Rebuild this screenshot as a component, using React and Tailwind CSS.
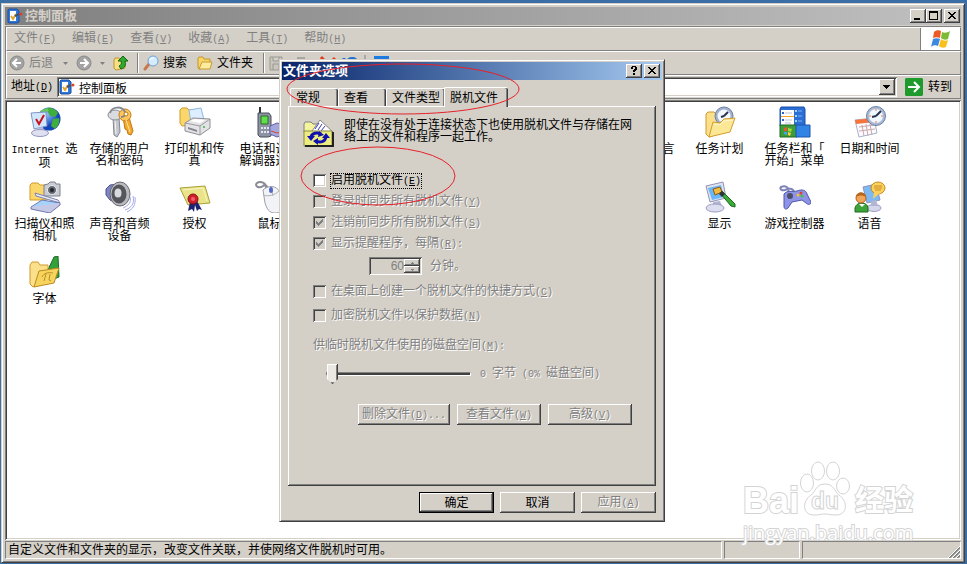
// src/App.jsx

import React, { useState } from "react";

const sunken = "shadow-[inset_1px_1px_#808080,inset_-1px_-1px_#fff,inset_2px_2px_#404040,inset_-2px_-2px_#d4d0c8]";
const raised = "shadow-[inset_-1px_-1px_#404040,inset_1px_1px_#fff,inset_-2px_-2px_#808080]";
const frame = "border border-[#404040] border-t-[#d4d0c8] border-l-[#d4d0c8] bg-[#d4d0c8] shadow-[inset_1px_1px_#fff,inset_-1px_-1px_#808080]";
const etched = "text-[#808080] [text-shadow:1px_1px_#fff]";

// half-width text, 6px per character
const Latin = ({ children }) => (
    <span className="font-['Liberation_Mono',monospace] text-[10px]">{children}</span>
);

const Key = ({ k, after = "" }) => (
    <Latin>(<u>{k}</u>){after}</Latin>
);

/* ---------- control panel icons ---------- */

const InternetIcon = () => (
    <svg viewBox="0 0 32 32" className="size-8">
        <defs>
            <radialGradient id="globe" cx=".4" cy=".3"><stop offset="0" stopColor="#8fc4ff" /><stop offset="1" stopColor="#1346b8" /></radialGradient>
        </defs>
        <circle cx="20" cy="13" r="11.500" fill="url(#globe)" />
        <path d="M18 2c5-1 9 2 11 5l-3 4-5-1-2-4zM24 13l6-1c1 5-1 8-4 11l-4-3z" fill="#3fae3c" />
        <path d="M11 5l7-3 2 3-6 2z" fill="#6cc85a" />
        <path d="M2 7l15-1 1 14-13 3z" fill="#cfe6fb" stroke="#7f93c8" />
        <path d="M7 13l3 5 5-9" fill="none" stroke="#c8141c" strokeWidth="2" />
        <path d="M8 22l6-1 1 4H9z" fill="#b9bddb" />
        <ellipse cx="11" cy="27" rx="8.500" ry="3.500" fill="#dfe1f1" stroke="#9297be" />
    </svg>
);

const KeysIcon = () => (
    <svg viewBox="0 0 32 32" className="size-8">
        <path d="M9 11l6 0 1 15-3 5-3-2z" fill="#c3c6cc" stroke="#85888f" />
        <path d="M11 13l1 15" stroke="#f4f5f7" />
        <ellipse cx="11" cy="9" rx="7" ry="5" fill="#d9dbe0" stroke="#8b8e96" />
        <path d="M19 11l6 0 4 14-2 4-3-1-1-4-2-1z" fill="#f3a92c" stroke="#bf7712" />
        <ellipse cx="21" cy="9" rx="6" ry="6" fill="#ffc65a" stroke="#c57f18" />
        <path d="M22 14l4 12" stroke="#ffe3a1" />
        <path d="M6 7c2-7 12-7 15-1 1 3-1 5-4 5" fill="none" stroke="#888b93" strokeWidth="2" />
        <circle cx="22" cy="8" r="2" fill="#fff" stroke="#b97812" />
    </svg>
);

const PrinterIcon = () => (
    <svg viewBox="0 0 32 32" className="size-8">
        <path d="M1 4l2-2h5l2 2h6v15l-13 1-2-3z" fill="#fbd66b" stroke="#d49b28" />
        <path d="M10 4l12-2 3 12-13 3z" fill="#dceeff" stroke="#8fb6e2" />
        <path d="M6 17l8-5 17 1v9l-10 7-15-4z" fill="#e3e3e6" stroke="#8e8e96" />
        <path d="M6 17l15 3 10-7M21 20v9" fill="none" stroke="#9a9aa2" />
        <path d="M9 21l9 3v2l-9-3z" fill="#85858d" />
        <path d="M11 15l5-2 10 1-5 3z" fill="#fff" />
        <circle cx="25" cy="21" r="1" fill="#37b83a" />
    </svg>
);

const PhoneIcon = () => (
    <svg viewBox="0 0 32 32" className="size-8">
        <path d="M5 1h2v7H5z" fill="#333" />
        <path d="M4 7h11l2 3v20l-3 1H6l-2-2z" fill="#8d93a3" stroke="#4a4e5c" />
        <path d="M7 10h7v8H7z" fill="#5fe04a" stroke="#2f6d2b" />
        <path d="M7 21h2v2H7zM10 21h2v2h-2zM13 21h2v2h-2zM7 25h2v2H7zM10 25h2v2h-2zM13 25h2v2h-2z" fill="#e4e6ee" />
        <path d="M16 20l7-3 9 2v9l-9 3-7-3z" fill="#a5a6dd" stroke="#5f60a8" />
        <path d="M17 25l6 2 8-2" stroke="#d2472c" strokeWidth="1" fill="none" />
    </svg>
);

const RegionIcon = () => (
    <svg viewBox="0 0 32 32" className="size-8">
        <circle cx="15" cy="16" r="13" fill="#3b7be0" stroke="#1a4aa0" />
        <path d="M8 6l8 2-2 6-6 4-4-5zM18 16l8 1-4 9-5-3z" fill="#4cb648" />
    </svg>
);

const SchedIcon = () => (
    <svg viewBox="0 0 32 32" className="size-8">
        <path d="M2 8l2-2h6l2 2 2 0v20l-9 3-3-3z" fill="#fbe08c" stroke="#cf9a2b" />
        <circle cx="20" cy="10" r="9" fill="#9fb1cf" stroke="#6d7fa2" />
        <circle cx="20" cy="10" r="6.500" fill="#f4f9ff" />
        <path d="M20 10l4-4M20 10l-3 1" stroke="#2b3550" strokeWidth="2" />
        <path d="M9 16l7 1 4-4 11-1-5 14-21 5z" fill="#fce795" stroke="#d39d2c" />
        <path d="M10 18l6 1 4-4 9-1" stroke="#fff6cf" fill="none" />
    </svg>
);

const TaskbarIcon = () => (
    <svg viewBox="0 0 32 32" className="size-8">
        <path d="M2 1h23l1 2v17H1V3z" fill="#2b6fd6" stroke="#1d4fa6" />
        <path d="M2 4h13v15H2z" fill="#fff" />
        <path d="M2 10h13v1H2z" fill="#f5a623" />
        <path d="M3 6h2v2H3zM3 13h2v2H3z" fill="#2f62c8" />
        <path d="M6 7h7M6 14h7M6 17h6" stroke="#b9c4da" />
        <path d="M16 4h2v2h-2zM16 9h2v2h-2zM16 14h2v2h-2z" fill="#9fd0ff" />
        <path d="M19 5h4M19 10h4M19 15h4" stroke="#7fb5f6" />
        <path d="M1 19h17v12H1z" fill="#3c9d3a" stroke="#20691f" />
        <path d="M17 19h14v12H17z" fill="#3283e6" stroke="#1c56ab" />
        <path d="M5 22l3-1v4l-3 0z" fill="#f0532d" />
        <path d="M9 22l4 1-1 3-3-1z" fill="#9bdc3d" />
        <path d="M5 26h3v3l-3-1z" fill="#4aa0f5" />
        <path d="M9 26l3 1-1 3-2-1z" fill="#fbd03a" />
    </svg>
);

const DateIcon = () => (
    <svg viewBox="0 0 32 32" className="size-8">
        <path d="M1 14l19-2 3 15-18 4z" fill="#fbfbff" stroke="#a9b0cc" />
        <path d="M1 14l19-2 1 4-19 2z" fill="#f4743a" />
        <path d="M5 21l15-2M5 25l16-2M8 19l2 11M12 18l2 12M16 18l2 11" stroke="#c9a9a9" />
        <circle cx="22" cy="10" r="9.500" fill="#a9bad6" stroke="#6d7fa2" />
        <circle cx="22" cy="10" r="7" fill="#f0f8ff" />
        <path d="M22 10l5-5M22 10l-4 1" stroke="#2b3550" strokeWidth="2" />
        <path d="M22 3v2M29 10h-2M22 17v-2M15 10h2" stroke="#ed7a4a" />
    </svg>
);

const ScannerIcon = () => (
    <svg viewBox="0 0 32 32" className="size-8">
        <path d="M1 4l2-2h6l2 2h6v15H1z" fill="#fbd66b" stroke="#d49b28" />
        <path d="M15 4l4-1 2-2h5l1 2h4v12H15z" fill="#c9ccd4" stroke="#7d818c" />
        <circle cx="23" cy="9" r="4.500" fill="#63676f" stroke="#eee" />
        <circle cx="23" cy="9" r="2" fill="#22252d" />
        <path d="M6 12l23 7 2 3L7 15z" fill="#e7eaf5" stroke="#7c83ad" />
        <path d="M2 26l11-7 18 3-10 9z" fill="#a5d3fb" stroke="#7077b0" />
        <path d="M2 26v2l19 4 10-8v-2" fill="#c6c9e6" stroke="#7077b0" />
    </svg>
);

const SpeakerIcon = () => (
    <svg viewBox="0 0 32 32" className="size-8">
        <path d="M2 8l4-4 8-1v20l-8-4-4-5z" fill="#7f86c6" stroke="#4c5188" />
        <ellipse cx="16" cy="13" rx="10" ry="12" fill="#b9bbc0" stroke="#68696e" />
        <ellipse cx="15" cy="13" rx="7.500" ry="9.500" fill="#55565b" />
        <ellipse cx="14" cy="12" rx="3.500" ry="4.500" fill="#d8d9dd" />
        <path d="M26 16c2 5-2 9-7 11M29 15c2 8-2 12-8 14M31 16c1 8-2 12-8 15" fill="none" stroke="#a4a9ea" />
    </svg>
);

const LicenseIcon = () => (
    <svg viewBox="0 0 32 32" className="size-8">
        <path d="M1 7l25-2 5 17-22 2z" fill="#e9e48a" stroke="#a9a136" />
        <path d="M4 9l20-2 4 13" fill="none" stroke="#f8f5c4" />
        <path d="M11 21l-2 9 4-2 2 3 1-7 2 6 2-2 3 1-5-9z" fill="#1c2372" />
        <circle cx="14" cy="18" r="5" fill="#cf1f2b" stroke="#8b0d18" />
        <circle cx="14" cy="18" r="2" fill="#f0606a" />
    </svg>
);

const MouseIcon = () => (
    <svg viewBox="0 0 32 32" className="size-8">
        <path d="M12 8C13 1 6 0 3 2c-3 3 2 6 6 3 2-2 5 0 4 3" fill="none" stroke="#8a8d96" strokeWidth="2" />
        <path d="M9 9c5-5 13-5 17 2l5 12c0 6-5 9-10 9-6 0-8-4-10-10z" fill="#f2f3f6" stroke="#9d9fa8" />
        <path d="M9 14c5 2 12 0 16-4M17 6l2 9" fill="none" stroke="#b0b2ba" />
        <ellipse cx="17" cy="9" rx="2" ry="3" fill="#5568c8" />
    </svg>
);

const DisplayIcon = () => (
    <svg viewBox="0 0 32 32" className="size-8">
        <path d="M2 5l17-4 3 16-16 4z" fill="#e2e3ef" stroke="#8f94b8" />
        <path d="M4 7l13-3 3 12-12 3z" fill="#69b6f8" />
        <path d="M9 21l7-1 2 5H9z" fill="#b3b6d3" />
        <ellipse cx="11" cy="27" rx="9" ry="4" fill="#dddef0" stroke="#9a9dc2" />
        <path d="M9 8l7-2 2 5-7 3z" fill="#f1b93e" stroke="#8a5b12" />
        <path d="M16 12l2-2 13 13v3l-4-1z" fill="#3dab3a" stroke="#1c6b1c" />
        <path d="M15 13l3-3 3 3-3 3z" fill="#333" />
    </svg>
);

const GameIcon = () => (
    <svg viewBox="0 0 32 32" className="size-8">
        <path d="M9 12C11 6 6 4 2 6c-2 2 1 4 4 3 4-2 8-2 9 2" fill="none" stroke="#7f83b5" strokeWidth="2" />
        <path d="M5 13c3-4 9-2 13-3 5-2 9-1 10 3l4 8c0 3-3 3-5 1l-4-3-10 2-4 6c-2 2-4 1-4-2z" fill="#8d94e8" stroke="#4f56a8" />
        <circle cx="11" cy="15" r="3" fill="#4b4e66" />
        <circle cx="19" cy="14" r="1.500" fill="#f2c12e" />
        <circle cx="22" cy="12" r="1.500" fill="#e2402f" />
        <circle cx="23" cy="15" r="1.500" fill="#45bf3c" />
    </svg>
);

const SpeechIcon = () => (
    <svg viewBox="0 0 32 32" className="size-8">
        <path d="M9 6l13-3 4 16-13 3z" fill="#7db9f4" stroke="#8f94b8" />
        <ellipse cx="20" cy="27" rx="7" ry="3.500" fill="#d4d6ea" stroke="#9a9dc2" />
        <path d="M17 20l5-1 2 6h-7z" fill="#b3b6d3" />
        <ellipse cx="24" cy="7" rx="7" ry="6" fill="#fbd25e" stroke="#c68a1e" />
        <path d="M20 11l-1 7 7-6z" fill="#fbd25e" />
        <path d="M20 5h8M20 7h8M21 9h6" stroke="#c98b22" />
        <path d="M1 31v-4c1-4 4-5 7-5s6 2 6 5v4z" fill="#3da33a" stroke="#1e6a1e" />
        <path d="M5 23l3 3 3-3" fill="#fff" />
        <circle cx="7" cy="17" r="5" fill="#f1a556" stroke="#a7622a" />
        <path d="M2 16c0-6 10-6 10 0-3-2-7-2-10 0z" fill="#b8651c" />
    </svg>
);

const FontsIcon = () => (
    <svg viewBox="0 0 32 32" className="size-8">
        <path d="M16 20L25 1l4-1 1 21-5 2v-5h-4z" fill="#34a03a" stroke="#1b6b22" />
        <path d="M1 9l2-3h6l2 3h8v17l-15 5-3-3z" fill="#fbe08c" stroke="#cf9a2b" />
        <path d="M10 15l20-3-5 15-20 4z" fill="#f6d45e" stroke="#bd8a1d" />
        <path d="M13 21c2-4 6-5 11-4M17 18l-2 7M21 18l-1 6 2 1" stroke="#b98f26" fill="none" />
    </svg>
);

const applets = [
    { name: <><Latin>Internet </Latin>选项</>, icon: InternetIcon, col: "col-start-1" },
    { name: "存储的用户名和密码", icon: KeysIcon, col: "col-start-2" },
    { name: "打印机和传真", icon: PrinterIcon, col: "col-start-3" },
    { name: "电话和调制\n解调器选项", icon: PhoneIcon, col: "col-start-4" },
    { name: "区域和语言选项", icon: RegionIcon, col: "col-start-9" },
    { name: "任务计划", icon: SchedIcon, col: "col-start-10" },
    { name: "任务栏和「\n开始」菜单", icon: TaskbarIcon, col: "col-start-11" },
    { name: "日期和时间", icon: DateIcon, col: "col-start-12" },
    { name: "扫描仪和照相机", icon: ScannerIcon, col: "col-start-1" },
    { name: "声音和音频设备", icon: SpeakerIcon, col: "col-start-2" },
    { name: "授权", icon: LicenseIcon, col: "col-start-3" },
    { name: "鼠标", icon: MouseIcon, col: "col-start-4" },
    { name: "显示", icon: DisplayIcon, col: "col-start-10" },
    { name: "游戏控制器", icon: GameIcon, col: "col-start-11" },
    { name: "语音", icon: SpeechIcon, col: "col-start-12" },
    { name: "字体", icon: FontsIcon, col: "col-start-1" },
];

/* ---------- small icons ---------- */

const PanelIcon = () => (
    <svg viewBox="0 0 16 16" className="size-4 shrink-0">
        <path d="M2 1h8l2 2v11l-2 1H2l-1-1V2z" fill="#2e77dd" stroke="#1c4f9e" />
        <path d="M3 3h6v10H3z" fill="#fff" />
        <path d="M4 8l2 3 3-5" fill="none" stroke="#e2a52c" strokeWidth="2" />
        <path d="M8 8l4-2" stroke="#44516f" strokeWidth="2" />
        <circle cx="14" cy="6" r="1.500" fill="#d8432a" />
    </svg>
);

const CircleArrow = ({ flip }) => (
    <svg viewBox="0 0 16 16" className={flip ? "size-4 -scale-x-100" : "size-4"}>
        <circle cx="8" cy="8" r="7" fill="#a3a3a3" stroke="#8b8b8b" />
        <path d="M12 8H5M8 4L4 8l4 4" fill="none" stroke="#fff" strokeWidth="2" />
    </svg>
);

const Caret = () => (
    <svg viewBox="0 0 5 3" className="h-[3px] w-[5px]"><path d="M0 0h5L2.500 3z" fill="#808080" /></svg>
);

const UpIcon = () => (
    <svg viewBox="0 0 16 16" className="size-4">
        <path d="M1 5l1-2h4l1 2h5v8l-9 2-2-2z" fill="#f9df82" stroke="#c4942b" />
        <path d="M8 14c4-1 5-4 4-8h3l-5-5-5 5h3c1 3 0 4-2 5z" fill="#2faa2f" stroke="#146414" />
    </svg>
);

const SearchIcon = () => (
    <svg viewBox="0 0 16 16" className="size-4">
        <path d="M6 9l-4 5" stroke="#c77a50" strokeWidth="3" strokeLinecap="round" />
        <circle cx="10" cy="6" r="5" fill="#d5ecff" stroke="#6f9fd8" strokeWidth="1" />
        <path d="M7 5c1-2 3-2 4-2" fill="none" stroke="#fff" strokeWidth="1" />
    </svg>
);

const FolderIcon = () => (
    <svg viewBox="0 0 16 16" className="size-4">
        <path d="M1 3l1-1h4l1 2h6v3l-9 7H2l-1-1z" fill="#f8d568" stroke="#c4942b" />
        <path d="M5 7h10l-2 7H2z" fill="#fdeba0" stroke="#c99a30" />
    </svg>
);

const FlagIcon = () => (
    <svg viewBox="0 0 20 18" className="h-[18px] w-5">
        <path d="M3 2c2-2 5-2 7-1L9 8C7 7 4 7 2 8z" fill="#ee5a24" />
        <path d="M11 2c2 1 5 1 8-1l-2 8c-2 1-5 1-7-1z" fill="#7dbb35" />
        <path d="M2 9c2-1 5-1 7 0l-2 7c-2-1-5-1-7 1z" fill="#3f88e0" />
        <path d="M10 9c2 2 5 2 7 1l-2 7c-2 1-5 1-7-1z" fill="#f8c11c" />
    </svg>
);

const OfflineIcon = () => (
    <svg viewBox="0 0 32 28" className="h-7 w-8">
        <path d="M1 5l1-2h6l2 2h6v8H1z" fill="#f4f4a0" stroke="#808080" />
        <path d="M9 12l8-11 13 12-4 6z" fill="#fff" stroke="#888" />
        <path d="M12 10l4-6M15 11l4-6M18 12l4-5" stroke="#3838b8" />
        <path d="M1 12h28v15H1z" fill="#ecec80" stroke="#8a8a40" />
        <path d="M2 27h28V13" fill="none" stroke="#222" strokeWidth="2" />
        <path d="M8 18c1-4 6-5 10-3M23 18c-1 5-6 6-10 4" fill="none" stroke="#1010b0" strokeWidth="3" />
        <path d="M4 17h8l-4 5zM19 19l4-5 4 5zM16 12l5 4-6 2zM15 19v7l-5-4z" fill="#1010b0" />
    </svg>
);

/* ---------- widgets ---------- */

const CaptionButton = ({ label, children }) => (
    <button aria-label={label} className={`flex h-[14px] w-4 items-center justify-center bg-[#d4d0c8] ${raised}`}>
        <svg viewBox="0 0 16 14" className="h-[14px] w-4" shapeRendering="crispEdges">{children}</svg>
    </button>
);

const CloseButton = () => (
    <CaptionButton label="关闭">
        <path d="M4 3h2v1h1v1h2V4h1V3h2v1h-1v1h-1v1H9v1h1v1h1v1h1v1h-2V9H9V8H7v1H6v1H4V9h1V8h1V7h1V6H6V5H5V4H4z" fill="#000" />
    </CaptionButton>
);

const PushButton = ({ children, width, disabled, isDefault }) => (
    <button
        disabled={disabled}
        className={`h-[21px] bg-[#d4d0c8] text-center whitespace-nowrap ${width} ${raised} ${disabled ? etched : ""} ${isDefault ? "border border-black" : ""}`}
    >
        {children}
    </button>
);

const CheckRow = ({ id, children, disabled, defaultChecked, focused }) => (
    <div className="flex h-[21px] items-center gap-1">
        <span className="grid size-[13px]">
            <input
                id={id}
                type="checkbox"
                disabled={disabled}
                defaultChecked={defaultChecked}
                className={`peer col-start-1 row-start-1 size-[13px] appearance-none bg-white disabled:bg-[#d4d0c8] ${sunken}`}
            />
            <svg viewBox="0 0 13 13" shapeRendering="crispEdges" className="pointer-events-none invisible col-start-1 row-start-1 size-[13px] peer-checked:visible">
                <path d="M3 5h1v1h1v1h1V6h1V5h1V4h1V3h1v3H9v1H8v1H7v1H6v1H5V9H4V8H3z" fill="#808080" />
            </svg>
        </span>
        <label
            htmlFor={id}
            className={`flex h-4 items-center border border-dotted ${focused ? "border-black" : "border-transparent"} ${disabled ? etched : ""}`}
        >
            <span>{children}</span>
        </label>
    </div>
);

const tabs = [
    { name: "常规", width: "w-12" },
    { name: "查看", width: "w-12" },
    { name: "文件类型", width: "w-[59px]" },
    { name: "脱机文件", width: "w-16" },
];

const FolderOptions = () => {
    const [active, setActive] = useState("脱机文件");

    return (
        <section aria-label="文件夹选项" className={`absolute top-[59px] left-[279px] w-[386px] p-[2px] ${frame}`}>
            <header className="flex h-[18px] items-center gap-[2px] bg-linear-to-r from-[#0a246a] to-[#a6caf0] pr-[2px]">
                <h2 className="flex-1 pl-px text-[13px] font-bold text-white">文件夹选项</h2>
                <CaptionButton label="帮助">
                    <path d="M5 3h1V2h4v1h1v3h-1v1H9v1H7V6h1V5h1V3H7v2H5zM7 9h2v2H7z" fill="#000" />
                </CaptionButton>
                <CloseButton />
            </header>

            <div role="tablist" className="relative z-10 mt-[7px] -mb-px flex items-end pl-2">
                {tabs.map((tab) => (
                    <button
                        key={tab.name}
                        role="tab"
                        aria-selected={tab.name === active}
                        onClick={() => setActive(tab.name)}
                        className={`rounded-t-xs border-t border-l border-white bg-[#d4d0c8] pl-[5px] text-left whitespace-nowrap shadow-[inset_-1px_0_#404040,inset_-2px_0_#808080] ${tab.width} ${tab.name === active ? "-ml-px h-5" : "mb-px h-[18px]"}`}
                    >
                        {tab.name}
                    </button>
                ))}
            </div>

            <div role="tabpanel" className={`mx-1.5 bg-[#d4d0c8] pt-[13px] pb-[61px] ${raised}`}>
                <div className="flex h-[30px] items-start gap-[9px] pl-[15px]">
                    <OfflineIcon />
                    <p className="w-[290px]">即使在没有处于连接状态下也使用脱机文件与存储在网络上的文件和程序一起工作。</p>
                </div>

                <div className="mt-[21px] pl-[25px]">
                    <CheckRow id="enable" focused>启用脱机文件<Key k="E" /></CheckRow>
                    <CheckRow id="logon" disabled>登录时同步所有脱机文件<Key k="Y" /></CheckRow>
                    <CheckRow id="logoff" disabled defaultChecked>注销前同步所有脱机文件<Key k="S" /></CheckRow>
                    <CheckRow id="remind" disabled defaultChecked>显示提醒程序，每隔<Key k="R" after=":" /></CheckRow>

                    <div className="mt-[3px] flex items-center gap-2 pl-14">
                        <div className={`flex h-[18px] w-[53px] p-[2px] ${sunken}`}>
                            <input id="minutes" type="text" defaultValue="60" disabled className="min-w-0 flex-1 bg-transparent text-right text-[#808080]" />
                            <div className="flex w-4 flex-col">
                                <button disabled aria-label="增加" className={`flex h-[7px] items-center justify-center bg-[#d4d0c8] ${raised}`}>
                                    <svg viewBox="0 0 3 2" className="h-[2px] w-[3px]"><path d="M1 0h1v1h1v1H0V1h1z" fill="#808080" /></svg>
                                </button>
                                <button disabled aria-label="减少" className={`flex h-[7px] items-center justify-center bg-[#d4d0c8] ${raised}`}>
                                    <svg viewBox="0 0 3 2" className="h-[2px] w-[3px]"><path d="M0 0h3v1H2v1H1V1H0z" fill="#808080" /></svg>
                                </button>
                            </div>
                        </div>
                        <label htmlFor="minutes" className={etched}>分钟。</label>
                    </div>

                    <div className="mt-[6px] flex flex-col gap-[3px]">
                        <CheckRow id="shortcut" disabled>在桌面上创建一个脱机文件的快捷方式<Key k="C" /></CheckRow>
                        <CheckRow id="encrypt" disabled>加密脱机文件以保护数据<Key k="N" /></CheckRow>
                    </div>

                    <label htmlFor="space" className={`mt-[13px] block ${etched}`}>供临时脱机文件使用的磁盘空间<Key k="M" after=":" /></label>
                    <div className="mt-[11px] flex h-5 items-center gap-[9px] pl-[13px]">
                        <input
                            id="space"
                            type="range"
                            defaultValue="0"
                            disabled
                            className="h-5 w-[145px] appearance-none bg-transparent [&::-webkit-slider-runnable-track]:h-1 [&::-webkit-slider-runnable-track]:border [&::-webkit-slider-runnable-track]:border-[#808080] [&::-webkit-slider-runnable-track]:border-r-white [&::-webkit-slider-runnable-track]:border-b-white [&::-webkit-slider-runnable-track]:bg-[#404040] [&::-webkit-slider-thumb]:-mt-[9px] [&::-webkit-slider-thumb]:h-5 [&::-webkit-slider-thumb]:w-[11px] [&::-webkit-slider-thumb]:appearance-none [&::-webkit-slider-thumb]:bg-[#ebe8e4] [&::-webkit-slider-thumb]:shadow-[inset_-1px_-1px_#404040,inset_1px_1px_#fff,inset_-2px_-2px_#808080] [&::-webkit-slider-thumb]:[clip-path:polygon(0_0,100%_0,100%_75%,50%_100%,0_75%)]"
                        />
                        <span className={etched}><Latin>0 </Latin>字节<Latin> (0% </Latin>磁盘空间<Latin>)</Latin></span>
                    </div>

                    <div className="mt-5 flex gap-[7px] pl-[45px]">
                        <PushButton width="w-[92px]" disabled>删除文件<Key k="D" after="..." /></PushButton>
                        <PushButton width="w-[84px]" disabled>查看文件<Key k="W" /></PushButton>
                        <PushButton width="w-[84px]" disabled>高级<Key k="V" /></PushButton>
                    </div>
                </div>
            </div>

            <footer className="mt-1.5 flex justify-end gap-1.5 pr-1.5 pb-1.5">
                <PushButton width="w-[75px]" isDefault>确定</PushButton>
                <PushButton width="w-[75px]">取消</PushButton>
                <PushButton width="w-[75px]" disabled>应用<Key k="A" /></PushButton>
            </footer>

            {/* red pen marks */}
            <svg viewBox="0 0 260 160" className="pointer-events-none absolute top-0 left-0 z-20 h-40 w-[260px]" fill="none" stroke="#e8202a">
                <ellipse cx="123" cy="29" rx="116" ry="25" />
                <ellipse cx="98" cy="116" rx="77" ry="29" />
            </svg>
        </section>
    );
};

const menus = [
    ["文件", "F"],
    ["编辑", "E"],
    ["查看", "V"],
    ["收藏", "A"],
    ["工具", "T"],
    ["帮助", "H"],
];

const bar = "border border-[#808080] border-t-white border-l-white";
const outline = "text-white [-webkit-text-stroke:2px_#d4d4d4] [paint-order:stroke_fill]";

const Watermark = () => (
    <div className="pointer-events-none absolute right-[50px] bottom-[19px] w-[174px]">
        <div className="mb-1 flex items-end">
            <span className={`font-['Liberation_Sans',sans-serif] text-[36px] leading-8 font-bold ${outline}`}>Bai</span>
            <svg viewBox="0 0 52 56" className="h-14 w-[52px] shrink-0" fill="#fff" stroke="#d4d4d4">
                <ellipse cx="8" cy="22" rx="6.500" ry="9" />
                <ellipse cx="19" cy="10" rx="6.500" ry="9" />
                <ellipse cx="34" cy="10" rx="6.500" ry="9" />
                <ellipse cx="44" cy="25" rx="6.500" ry="8" />
                <path d="M26 23c-9 0-9 7-14 11-9 6-9 20 3 20 5 0 7-1 11-1s6 1 11 1c12 0 12-14 3-20-5-4-5-11-14-11z" />
                <text x="12" y="48" fontFamily="Liberation Sans" fontSize="23" fontWeight="bold">du</text>
            </svg>
            <span className={`pl-1 text-[29px] leading-8 font-bold ${outline}`}>经验</span>
        </div>
        <div className={`font-['Open_Sans',sans-serif] text-[20px] leading-6 ${outline}`}>jingyan.baidu.com</div>
    </div>
);

const App = () => {
    const [address, setAddress] = useState("控制面板");

    return (
        <div className="relative flex h-screen flex-col bg-[#3a6ea5] pt-[3px] pr-[2px] pb-px pl-px font-['Liberation_Sans','Noto_Sans_CJK_SC',sans-serif] text-[12px] leading-3 text-black">
            <main className={`flex flex-1 flex-col p-[3px] ${frame}`}>
                <header className="flex h-[18px] items-center bg-linear-to-r from-[#808080] to-[#c0c0c0] pr-px pl-[2px]">
                    <PanelIcon />
                    <h1 className="flex-1 pl-[2px] text-[13px] font-bold text-[#d4d0c8]">控制面板</h1>
                    <CaptionButton label="最小化"><path d="M4 9h6v2H4z" fill="#000" /></CaptionButton>
                    <CaptionButton label="最大化"><path d="M3 2h9v9H3zM4 4v6h7V4z" fill="#000" fillRule="evenodd" /></CaptionButton>
                    <span className="w-[2px]" />
                    <CloseButton />
                </header>

                <div className="mt-px mb-px border-t border-l border-[#808080]">
                    <div className={`flex h-6 ${bar}`}>
                        <nav className="flex flex-1 items-center gap-4 pl-[7px]">
                            {menus.map(([name, key]) => (
                                <button key={key} className="whitespace-nowrap text-[#808080]">{name}<Key k={key} /></button>
                            ))}
                        </nav>
                        <div className="flex w-10 items-center justify-center border-l border-[#808080] bg-white">
                            <FlagIcon />
                        </div>
                    </div>

                    <div className={`flex h-6 items-center overflow-hidden ${bar}`}>
                        <button className="flex items-center gap-1 pl-[2px] text-[#808080]"><CircleArrow />后退</button>
                        <button aria-label="后退列表" className="ml-2.5"><Caret /></button>
                        <button aria-label="前进" className="ml-2"><CircleArrow flip /></button>
                        <button aria-label="前进列表" className="ml-2"><Caret /></button>
                        <button aria-label="向上" className="ml-2"><UpIcon /></button>
                        <span className="ml-2 h-5 w-[2px] border-r border-l border-r-white border-l-[#808080]" />
                        <button className="ml-1 flex items-center gap-1"><SearchIcon />搜索</button>
                        <button className="ml-2.5 flex items-center gap-1"><FolderIcon />文件夹</button>
                        <span className="ml-2.5 h-5 w-[2px] border-r border-l border-r-white border-l-[#808080]" />
                        <svg viewBox="0 0 124 16" className="ml-1 h-4 w-[124px]">
                            <path d="M1 2h12v13H1zM4 2v4h6V2M4 15v-6h6v6" fill="#c9c6bf" stroke="#9a9892" />
                            <path d="M28 2h8v3h-8z" fill="#a8a6a0" />
                            <path d="M52 2l11 12M66 3L55 14" stroke="#e23c1c" strokeWidth="3" />
                            <path d="M75 3v6M78 8c1-6 10-6 10 0 0 4-4 6-7 6" fill="none" stroke="#1f6fd0" strokeWidth="3" />
                            <path d="M96 0v16" stroke="#808080" />
                            <path d="M105 1h15v13h-15z" fill="#1c7be0" />
                        </svg>
                    </div>

                    <div className={`flex h-6 items-center ${bar}`}>
                        <label htmlFor="address" className="pl-1">地址<Key k="D" /></label>
                        <div className={`ml-1 flex h-5 flex-1 items-center bg-white p-[2px] ${sunken}`}>
                            <PanelIcon />
                            <input id="address" type="text" value={address} onChange={(e) => setAddress(e.target.value)} className="min-w-0 flex-1 pl-1 outline-none" />
                            <button aria-label="地址列表" className={`flex h-4 w-4 items-center justify-center bg-[#d4d0c8] ${raised}`}>
                                <svg viewBox="0 0 7 4" className="h-1 w-[7px]" shapeRendering="crispEdges"><path d="M0 0h7v1H6v1H5v1H4v1H3V3H2V2H1V1H0z" fill="#000" /></svg>
                            </button>
                        </div>
                        <button className="flex items-center gap-[5px] pr-2 pl-2">
                            <svg viewBox="0 0 18 18" className="size-[18px]">
                                <path d="M1 0h16l1 1v16l-1 1H1l-1-1V1z" fill="#1f9a2c" />
                                <path d="M3 9h11M9 4l5 5-5 5" fill="none" stroke="#fff" strokeWidth="2" />
                            </svg>
                            转到
                        </button>
                    </div>
                </div>

                <ul className={`grid flex-1 auto-rows-[75px] grid-cols-[repeat(12,75px)] content-start bg-white px-[2px] pt-1.5 ${sunken}`}>
                    {applets.map(({ name, icon: Icon, col }) => (
                        <li key={col + Icon.name} className={`flex flex-col items-center gap-[5px] ${col}`}>
                            <Icon />
                            <span className="px-[3px] text-center whitespace-pre-line">{name}</span>
                        </li>
                    ))}
                </ul>

                <footer className="mt-px flex h-[18px] gap-[2px]">
                    <p className="flex flex-1 items-center border border-white border-t-[#808080] border-l-[#808080] pl-[2px]">
                        自定义文件和文件夹的显示，改变文件关联，并使网络文件脱机时可用。
                    </p>
                    <div className="w-19 border border-white border-t-[#808080] border-l-[#808080]" />
                    <div className="flex w-[159px] items-end justify-end border border-white border-t-[#808080] border-l-[#808080]">
                        <svg viewBox="0 0 12 12" className="size-3">
                            <path d="M1 12L12 1M5 12l7-7M9 12l3-3" stroke="#808080" strokeWidth="2" />
                            <path d="M0 12L12 0M4 12l8-8M8 12l4-4" stroke="#fff" />
                        </svg>
                    </div>
                </footer>
            </main>

            <FolderOptions />
            <Watermark />
        </div>
    );
};

export default App;
